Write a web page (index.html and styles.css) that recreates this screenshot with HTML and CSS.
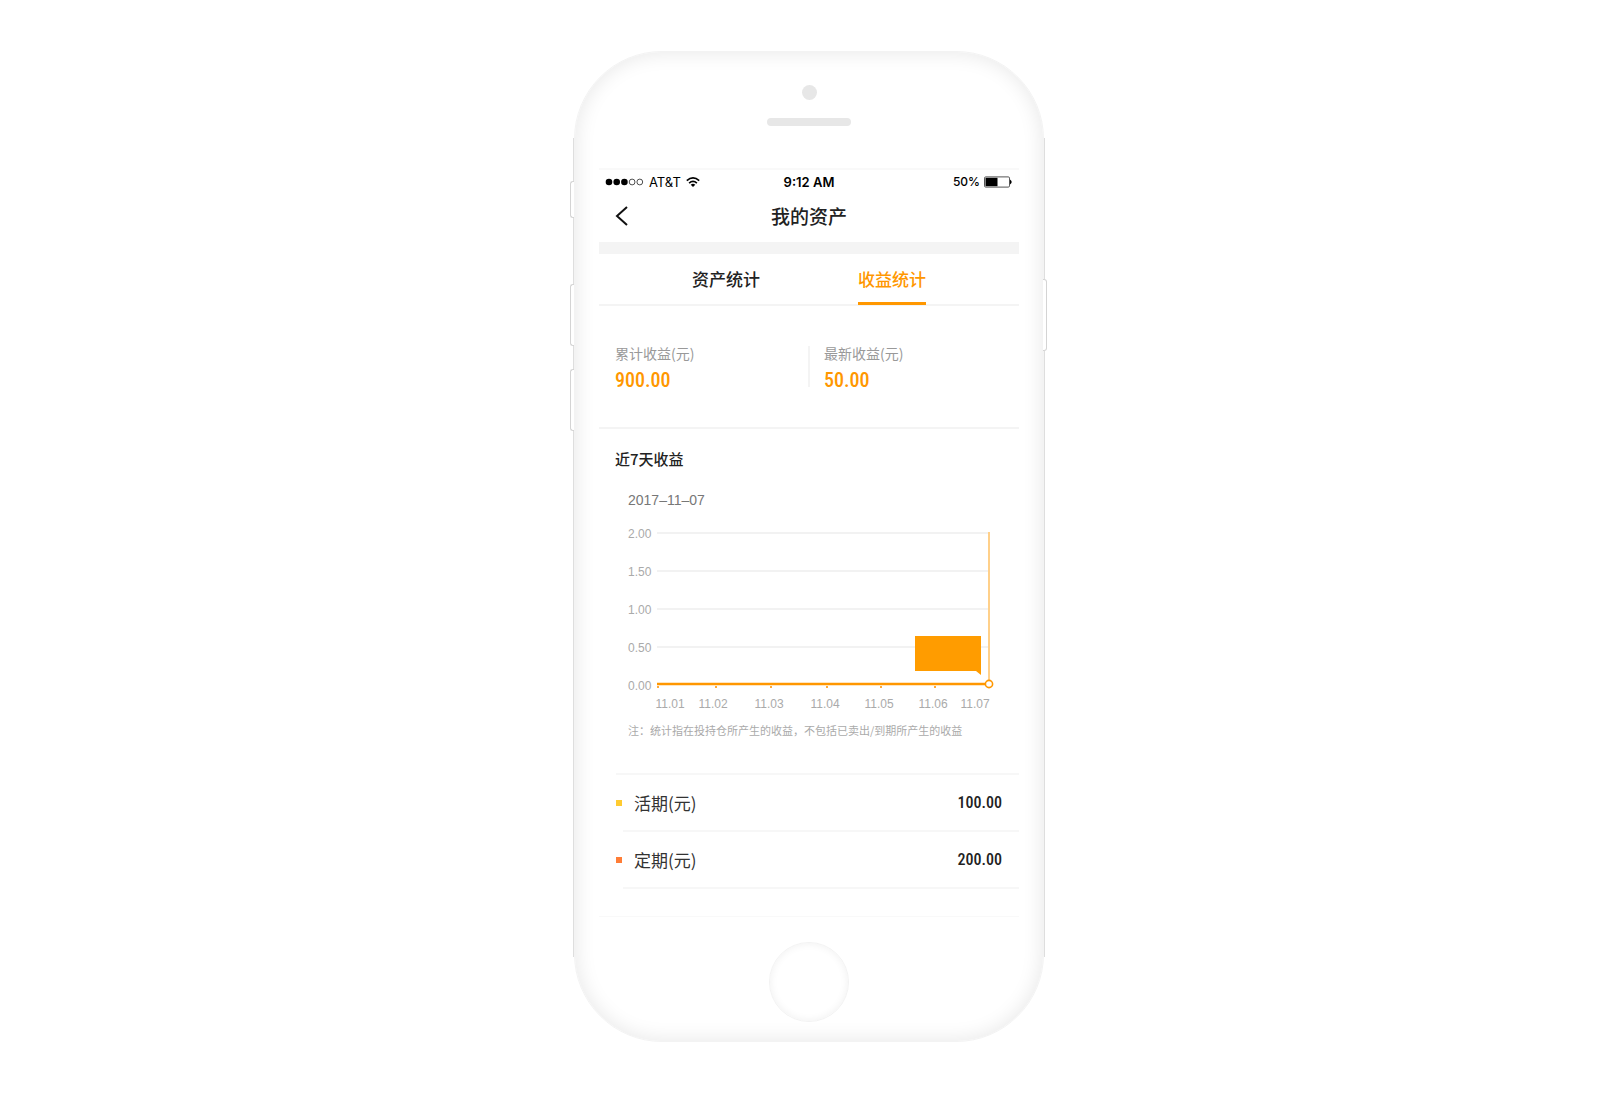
FILE: index.html
```html
<!DOCTYPE html>
<html lang="zh-CN">
<head>
<meta charset="utf-8">
<meta name="viewport" content="width=device-width, initial-scale=1">
<title>我的资产</title>
<link rel="stylesheet" href="styles.css">
</head>
<body>
<div class="phone">
  <span class="side-key key-mute"></span>
  <span class="side-key key-up"></span>
  <span class="side-key key-down"></span>
  <span class="side-key key-power"></span>
  <div class="bezel-top">
    <span class="camera"></span>
    <span class="speaker"></span>
  </div>
  <main class="screen">
    <div class="status">
      <div class="status-left">
        <svg width="39" height="8" viewBox="0 0 39 8" aria-hidden="true">
          <circle cx="4" cy="4" r="3.3"/><circle cx="11.7" cy="4" r="3.3"/><circle cx="19.4" cy="4" r="3.3"/>
          <g fill="none" stroke="#222" stroke-width=".8"><circle cx="27.1" cy="4" r="2.9"/><circle cx="34.8" cy="4" r="2.9"/></g>
        </svg>
        <span class="carrier">AT&amp;T</span>
        <svg class="wifi" width="14" height="10" viewBox="0 0 14 10" aria-hidden="true">
          <g fill="none" stroke="#000" stroke-width="1.7"><path d="M.8 3.6Q7-1.7 13.2 3.6"/><path d="M3.1 6.1Q7 2.8 10.9 6.1"/></g>
          <path d="M7 10L4.7 7.7Q7 6 9.3 7.7Z"/>
        </svg>
      </div>
      <span class="clock">9:12 AM</span>
      <div class="status-right">
        <span>50%</span>
        <svg width="29" height="12" viewBox="0 0 29 12" aria-hidden="true">
          <rect x=".5" y=".9" width="25" height="10.2" rx="1.2" fill="none" stroke="#555"/>
          <rect x="1.5" y="1.8" width="12" height="8.4"/>
          <path d="M26 3.5Q29.4 6 26 8.5Z"/>
        </svg>
      </div>
    </div>
    <header class="titlebar">
      <button class="back" type="button" aria-label="返回">
        <svg width="14" height="20" viewBox="0 0 14 20" aria-hidden="true"><path d="M12 1L2 10L12 19" fill="none" stroke="#111" stroke-width="2"/></svg>
      </button>
      <h1>我的资产</h1>
    </header>
    <nav class="tabs">
      <button class="tab" type="button">资产统计</button>
      <button class="tab active" type="button">收益统计</button>
    </nav>
    <section class="stats">
      <div class="stat"><span class="label">累计收益(元)</span><strong>900.00</strong></div>
      <div class="stat"><span class="label">最新收益(元)</span><strong>50.00</strong></div>
    </section>
    <section class="trend">
      <h2>近7天收益</h2>
      <time datetime="2017-11-07">2017–11–07</time>
      <svg class="chart" viewBox="0 0 420 192" role="img" aria-label="近7天收益">
        <g stroke="#f2f2f2" stroke-width="2">
          <path d="M58 10H390M58 48H390M58 86H390M58 124H390"/>
        </g>
        <g class="axis">
          <text x="29" y="15">2.00</text><text x="29" y="53">1.50</text><text x="29" y="91">1.00</text><text x="29" y="129">0.50</text><text x="29" y="167">0.00</text>
        </g>
        <g class="axis days">
          <text x="71" y="185">11.01</text><text x="114" y="185">11.02</text><text x="170" y="185">11.03</text><text x="226" y="185">11.04</text><text x="280" y="185">11.05</text><text x="334" y="185">11.06</text><text x="376" y="185">11.07</text>
        </g>
        <path d="M390 9V158" stroke="#ffd08a" stroke-width="2"/>
        <path d="M58 161H387" stroke="#ff9700" stroke-width="2.4"/>
        <path d="M59 163v2M117 163v2M172 163v2M228 163v2M282 163v2M336 163v2" stroke="#ffab3b" stroke-width="2"/>
        <path d="M316 113H382V152L377 148H316Z" fill="#ff9c00"/>
        <circle cx="390" cy="161" r="3.6" fill="#fff" stroke="#ff9700" stroke-width="1.6"/>
      </svg>
      <p class="note">注：统计指在投持仓所产生的收益，不包括已卖出/到期所产生的收益</p>
    </section>
    <ul class="items">
      <li><span class="mark demand"></span><span>活期(元)</span><strong>100.00</strong></li>
      <li><span class="mark fixed"></span><span>定期(元)</span><strong>200.00</strong></li>
    </ul>
  </main>
  <button class="home" type="button" aria-label="主屏幕"></button>
</div>
</body>
</html>
```
FILE: styles.css
```css
* { box-sizing: border-box; }
body {
  margin: 0;
  padding: 51px 0 58px 18px;
  background: #fff;
  color: #222;
  font-family: Inter, "Noto Sans CJK SC", sans-serif;
  display: flex;
  justify-content: center;
}
button { border: 0; padding: 0; background: none; color: inherit; font: inherit; }
h1, h2, p, ul { margin: 0; padding: 0; font-weight: 500; }
h1, h2, .tab, .label, .note, .items { font-family: "Noto Sans CJK SC", sans-serif; }

.phone {
  position: relative;
  width: 470px;
  padding: 0 25px 19px;
  border: 1px solid #f3f3f3;
  border-radius: 88px;
  background: #fff;
  box-shadow: inset 0 0 20px 1px #e8e8e8;
  display: flex;
  flex-direction: column;
}
/* metal rails along both long edges */
.phone::before {
  content: "";
  position: absolute;
  top: 86px;
  bottom: 84px;
  left: -2px;
  right: -2px;
  border: solid #dedede;
  border-width: 0 1px;
  pointer-events: none;
}
.side-key {
  position: absolute;
  left: -5px;
  width: 4px;
  border: 1px solid #d4d4d4;
  border-right: 0;
  border-radius: 3px 0 0 3px;
  background: #fff;
}
.key-mute { top: 129px; height: 37px; }
.key-up { top: 232px; height: 62px; }
.key-down { top: 317px; height: 62px; }
.key-power {
  top: 227px;
  height: 72px;
  left: auto;
  right: -4px;
  border: 1px solid #d4d4d4;
  border-left: 0;
  border-radius: 0 3px 3px 0;
}

.bezel-top {
  height: 116px;
  padding-top: 33px;
  display: flex;
  flex-direction: column;
  align-items: center;
  gap: 18px;
}
.camera { width: 15px; height: 15px; border-radius: 50%; background: #e7e7e7; }
.speaker { width: 84px; height: 8px; border-radius: 4px; background: #e7e7e7; }

.screen {
  margin: 0 -1px;
  border-top: 2px solid #f9f9f9;
  border-bottom: 1px solid #f9f9f9;
  padding-bottom: 27px;
}
.status {
  height: 23px;
  padding: 0 6px;
  display: grid;
  grid-template-columns: 1fr auto 1fr;
  align-items: center;
  color: #000;
  font-size: 13px;
  font-weight: 500;
}
.status-left, .status-right { display: flex; align-items: center; gap: 4px; }
.status-left { gap: 5px; }
.carrier { font-weight: 400; }
.clock { font-weight: 600; }
.status-right { justify-content: flex-end; font-size: 12px; }

.titlebar {
  height: 61px;
  padding: 0 16px 3px;
  border-bottom: 12px solid #f4f4f4;
  display: grid;
  grid-template-columns: 1fr auto 1fr;
  align-items: center;
}
.back { justify-self: start; height: 20px; line-height: 0; }
h1 { font-size: 19px; line-height: 28px; }

.tabs {
  height: 52px;
  border-bottom: 2px solid #f4f4f4;
  display: flex;
  justify-content: center;
  gap: 98px;
}
.tab {
  height: 51px;
  border-bottom: 3px solid transparent;
  font-size: 17px;
  font-weight: 500;
}
.active { color: #ff9700; border-color: #ff9700; }

.stats {
  padding: 40px 0;
  border-bottom: 2px solid #f4f4f4;
  display: grid;
  grid-template-columns: calc(50% - 1px) 1fr;
}
.stat { height: 41px; padding-left: 16px; display: flex; flex-direction: column; }
.stat + .stat { padding-left: 14px; border-left: 2px solid #f4f4f4; }
.label { color: #999; font-size: 14px; line-height: 14px; }
.stat strong { margin-top: 9px; color: #ff9700; font-size: 20px; line-height: 22px; }
.stat strong, .items strong { font-family: "Roboto Condensed", Roboto, sans-serif; font-weight: 500; }

.trend { padding: 18px 0 35px; display: flex; flex-direction: column; }
h2 { padding-left: 16px; font-size: 15px; line-height: 24px; }
.trend time, .axis { font-family: "Liberation Sans", sans-serif; }
.trend time { padding-left: 29px; margin-top: 19px; color: #777; font-size: 14px; line-height: 20px; }
.chart { display: block; width: 100%; margin-top: 13px; }
.axis { fill: #aaa; font-size: 12px; }
.days { text-anchor: middle; }
.note { margin-top: 7px; padding-left: 29px; color: #aaa; font-size: 11px; font-weight: 400; line-height: 16px; white-space: nowrap; }

.items { list-style: none; color: #333; font-size: 17px; font-weight: 400; }
.items li {
  height: 57px;
  margin-left: 24px;
  padding-right: 17px;
  border-bottom: 2px solid #f7f7f7;
  display: flex;
  align-items: center;
}
.items::before { content: ""; display: block; height: 2px; margin-left: 17px; background: #f7f7f7; }
.mark { width: 6px; height: 6px; margin: 0 12px 0 -7px; }
.demand { background: #ffcb31; }
.fixed { background: #ff7d36; }
.items strong { margin-left: auto; color: #222; font-size: 16px; }

.home {
  align-self: center;
  width: 80px;
  height: 80px;
  margin-top: 25px;
  border: 1px solid #f3f3f3;
  border-radius: 50%;
  box-shadow: inset 0 0 8px #f0f0f0;
}
```
